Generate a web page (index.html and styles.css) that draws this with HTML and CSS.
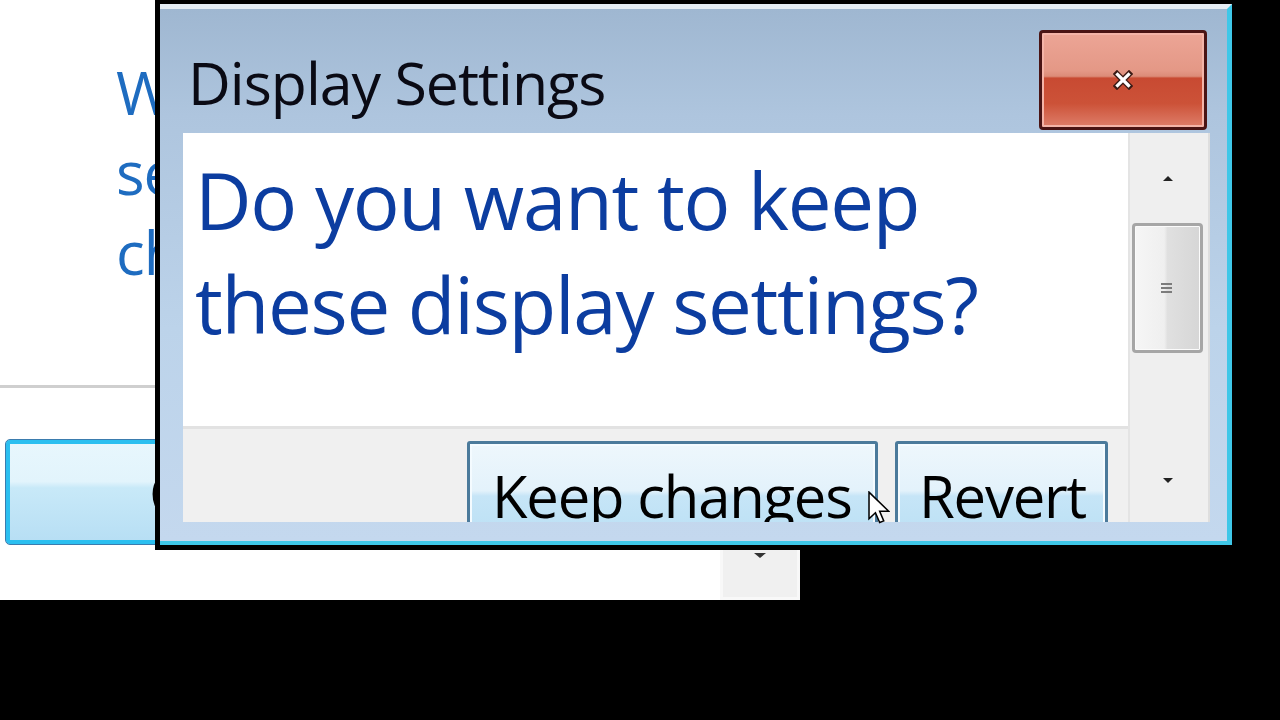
FILE: index.html
```html
<!DOCTYPE html>
<html lang="en">
<head>
<meta charset="utf-8">
<title>Display Settings</title>
<link rel="stylesheet" href="styles.css">
</head>
<body>
<div class="screen">
  <div class="bgwin">
    <div class="bg-main">
      <p class="bg-text">Windows will<br>set your display<br>changes</p>
      <div class="bg-rule"></div>
      <button class="bg-btn">Close</button>
    </div>
    <div class="bg-scroll">
      <div class="bg-scroll-btn"><span class="arrow-down"></span></div>
    </div>
  </div>

  <div class="dialog">
    <div class="frame">
      <div class="titlebar">
        <h1 class="title">Display Settings</h1>
        <button class="close" aria-label="Close">
          <svg width="20" height="20" viewBox="0 0 20 20">
            <path d="M4 4 L16 16 M16 4 L4 16" stroke="#3a1a14" stroke-width="6" stroke-linecap="square"/>
            <path d="M4.5 4.5 L15.5 15.5 M15.5 4.5 L4.5 15.5" stroke="#ffffff" stroke-width="3.2" stroke-linecap="square"/>
          </svg>
        </button>
      </div>
      <div class="client">
        <div class="main">
          <div class="content">
            <p class="message">Do you want to keep<br>these display settings?</p>
          </div>
          <div class="footer">
            <button class="btn btn-keep">Keep changes</button>
            <button class="btn btn-revert">Revert</button>
          </div>
        </div>
        <div class="scrollbar">
          <div class="sb-btn"><span class="arrow-up"></span></div>
          <div class="sb-thumb"><span class="grip"></span></div>
          <div class="sb-track"></div>
          <div class="sb-btn sb-btn-down"><span class="arrow-down"></span></div>
        </div>
      </div>
    </div>
  </div>

  <svg class="cursor" width="22" height="34" viewBox="0 0 13 20">
    <path d="M0.6 0.6 L0.6 16.4 L4.4 12.8 L6.9 18.6 L9.3 17.6 L6.9 11.9 L12.2 11.9 Z" fill="#ffffff" stroke="#000000" stroke-width="0.9" stroke-linejoin="miter"/>
  </svg>
</div>
</body>
</html>
```

FILE: styles.css
```css
* { box-sizing: border-box; margin: 0; padding: 0; }

html, body {
  width: 1280px;
  height: 720px;
  overflow: hidden;
  background: #000;
}

body {
  font-family: "Open Sans", "Noto Sans", "DejaVu Sans", sans-serif;
}

.screen {
  position: relative;
  width: 1280px;
  height: 720px;
  background: #000;
}

/* ---------- background window ---------- */
.bgwin {
  width: 800px;
  height: 600px;
  background: #fff;
  display: flex;
}

.bg-main {
  width: 720px;
  display: flex;
  flex-direction: column;
}

.bg-text {
  padding: 52px 0 0 116px;
  color: #1e6cc0;
  font-size: 60px;
  line-height: 80px;
  white-space: nowrap;
  letter-spacing: -1px;
}

.bg-rule {
  margin-top: 93px;
  height: 3px;
  background: #cfcfcf;
}

.bg-btn {
  margin: 51px 0 0 5px;
  width: 420px;
  height: 106px;
  border: 1px solid #3b7cae;
  border-radius: 5px;
  box-shadow: inset 0 0 0 4px #2bbff0;
  background: linear-gradient(#e8f7fd 0%, #e2f4fc 40%, #c8e9f8 46%, #b6def4 100%);
  font-family: inherit;
  font-size: 58px;
  color: #000;
  text-align: left;
  padding-left: 143px;
}

.bg-scroll {
  width: 80px;
  display: flex;
  flex-direction: column;
  justify-content: flex-end;
}

.bg-scroll-btn {
  height: 90px;
  background: #f0f0f0;
  border: 3px solid #f8f8f8;
  display: flex;
  align-items: center;
  justify-content: center;
}

/* ---------- dialog ---------- */
.dialog {
  position: absolute;
  left: 155px;
  top: 0;
  width: 1077px;
  height: 550px;
  background: #000;
  padding: 4px 0 5px 5px;
}

.frame {
  height: 100%;
  display: flex;
  flex-direction: column;
  border-top: 5px solid #e6edf5;
  border-right: 5px solid #3fc7e8;
  border-bottom: 4px solid #3fc7e8;
  background: linear-gradient(#9fb7d1 0%, #aec5de 20%, #bcd3ea 60%, #c4d8ee 100%);
  padding: 0 17px 19px 23px;
}

.titlebar {
  height: 124px;
  display: flex;
  justify-content: space-between;
  align-items: flex-start;
  padding-left: 5px;
  margin-right: 3px;
}

.title {
  margin-top: 43px;
  font-weight: 400;
  font-size: 59px;
  line-height: 60px;
  color: #0a0a14;
  letter-spacing: -1px;
}

.close {
  margin-top: 21px;
  width: 168px;
  height: 100px;
  border: 3px solid #4a1414;
  border-radius: 4px;
  box-shadow: inset 0 0 0 2px #f4b4a8;
  background: linear-gradient(#eca596 0%, #e49886 40%, #dc8c78 46%, #c84a32 48%, #cc5238 75%, #de7e6a 100%);
  display: flex;
  align-items: center;
  justify-content: center;
}

.client {
  flex: 1;
  display: flex;
  min-height: 0;
}

.main {
  width: 945px;
  display: flex;
  flex-direction: column;
  min-height: 0;
}

.content {
  height: 296px;
  background: #fff;
  border-bottom: 3px solid #e2e2e2;
  padding: 15px 0 0 12px;
}

.message {
  color: #0c3da0;
  font-size: 78px;
  line-height: 104px;
  letter-spacing: -1.3px;
  white-space: nowrap;
}

.footer {
  flex: 1;
  background: #f0f0f0;
  overflow: hidden;
  display: flex;
  justify-content: flex-end;
  align-items: flex-start;
  gap: 17px;
  padding: 12px 20px 0 0;
}

.btn {
  flex: none;
  height: 110px;
  border: 3px solid #4b7a9b;
  border-radius: 3px;
  box-shadow: inset 0 0 0 2px #f4fbff;
  background: linear-gradient(#eef7fc 0%, #e3f2fb 45%, #c6e5f7 50%, #b8dff4 100%);
  font-family: inherit;
  font-size: 58px;
  line-height: 70px;
  color: #000;
  letter-spacing: -1.2px;
  text-align: left;
  padding: 0 0 0 22px;
  align-self: flex-start;
  display: block;
}

.btn-keep { width: 411px; }
.btn-revert { width: 213px; padding-left: 21px; }

/* scrollbar */
.scrollbar {
  width: 82px;
  background: #efefef;
  border-left: 2px solid #e4e4e4;
  border-right: 2px solid #dedede;
  display: flex;
  flex-direction: column;
  padding: 0 5px 0 2px;
}

.sb-btn {
  height: 90px;
  display: flex;
  align-items: center;
  justify-content: center;
}

.sb-btn-down { height: 84px; }

.sb-thumb {
  height: 130px;
  border: 3px solid #a6a6a6;
  border-radius: 4px;
  box-shadow: inset 0 0 0 1px #fbfbfb;
  background: linear-gradient(to right, #f6f6f6 0%, #efefef 45%, #e0e0e0 50%, #d6d6d6 100%);
  display: flex;
  align-items: center;
  justify-content: center;
}

.grip {
  width: 11px;
  height: 11px;
  background: repeating-linear-gradient(#7c7c7c 0 2px, transparent 2px 4px);
  margin-left: -2px;
}

.sb-track { flex: 1; }

.arrow-up {
  width: 0;
  height: 0;
  border-left: 5px solid transparent;
  border-right: 5px solid transparent;
  border-bottom: 5px solid #222;
}

.arrow-down {
  width: 0;
  height: 0;
  border-left: 5px solid transparent;
  border-right: 5px solid transparent;
  border-top: 5px solid #222;
}

.bg-scroll-btn .arrow-down {
  border-left-width: 6px;
  border-right-width: 6px;
  border-top-width: 5px;
  border-top-color: #333;
}

.cursor {
  position: absolute;
  left: 868px;
  top: 491px;
}
```
